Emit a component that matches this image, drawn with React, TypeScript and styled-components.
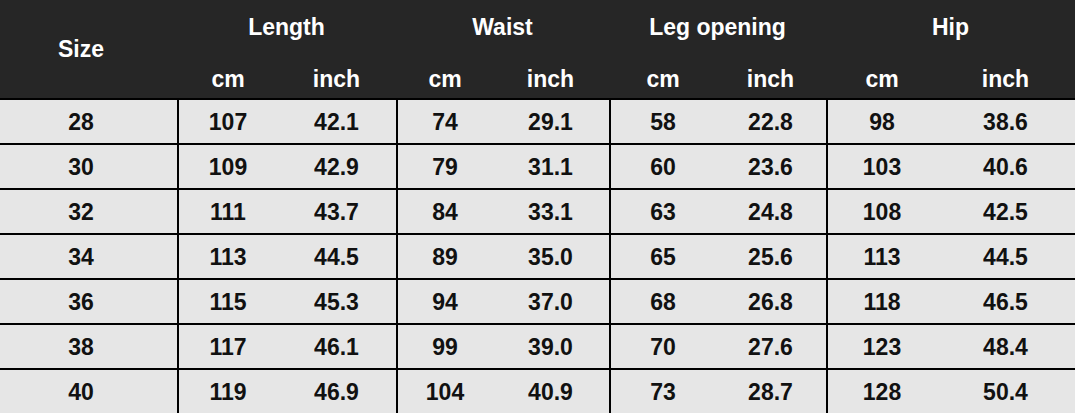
import React from 'react';
import styled, { createGlobalStyle } from 'styled-components';

const GlobalStyle = createGlobalStyle`
  html, body {
    margin: 0;
    padding: 0;
    background: #e6e6e6;
  }
  body {
    font-family: "Liberation Sans", Arial, sans-serif;
  }
`;

const COLUMNS = '177px 100px 119px 96px 117px 106px 111px 110px 139px';

const Table = styled.div`
  width: 1075px;
  font-family: "Liberation Sans", Arial, sans-serif;
  font-weight: 700;
  font-size: 23px;
`;

const Header = styled.div`
  display: grid;
  grid-template-columns: ${COLUMNS};
  grid-template-rows: 55px 43px;
  background-color: #262626;
  color: #ffffff;
`;

const SizeHead = styled.div`
  grid-row: 1 / span 2;
  display: flex;
  align-items: center;
  justify-content: center;
  padding-right: 15px;
`;

const GroupTitle = styled.div`
  grid-column: span 2;
  display: flex;
  align-items: center;
  justify-content: center;
`;

const UnitHead = styled.div<{ $first?: boolean }>`
  grid-row: 2;
  display: flex;
  align-items: center;
  justify-content: center;
  padding-top: 5px;
  padding-left: ${props => (props.$first ? '2px' : '0')};
`;

const Row = styled.div`
  display: grid;
  grid-template-columns: ${COLUMNS};
  height: 45px;
  box-sizing: border-box;
  border-top: 2px solid #000;
  background-color: #e6e6e6;
  color: #111;
`;

const Cell = styled.div<{ $first?: boolean; $size?: boolean }>`
  display: flex;
  align-items: center;
  justify-content: center;
  box-sizing: border-box;
  padding-top: 1px;
  border-left: ${props => (props.$first ? '2px solid #000' : 'none')};
  padding-right: ${props => (props.$size ? '15px' : '0')};
`;

const groups = ['Length', 'Waist', 'Leg opening', 'Hip'];

const rows: string[][] = [
  ['28', '107', '42.1', '74', '29.1', '58', '22.8', '98', '38.6'],
  ['30', '109', '42.9', '79', '31.1', '60', '23.6', '103', '40.6'],
  ['32', '111', '43.7', '84', '33.1', '63', '24.8', '108', '42.5'],
  ['34', '113', '44.5', '89', '35.0', '65', '25.6', '113', '44.5'],
  ['36', '115', '45.3', '94', '37.0', '68', '26.8', '118', '46.5'],
  ['38', '117', '46.1', '99', '39.0', '70', '27.6', '123', '48.4'],
  ['40', '119', '46.9', '104', '40.9', '73', '28.7', '128', '50.4'],
];

const App: React.FC = () => {
  return (
    <>
      <GlobalStyle />
      <Table>
        <Header>
          <SizeHead>Size</SizeHead>
          {groups.map(g => (
            <GroupTitle key={g}>{g}</GroupTitle>
          ))}
          {groups.map(g => (
            <React.Fragment key={g}>
              <UnitHead $first>cm</UnitHead>
              <UnitHead>inch</UnitHead>
            </React.Fragment>
          ))}
        </Header>
        {rows.map(r => (
          <Row key={r[0]}>
            {r.map((v, i) => (
              <Cell key={i} $size={i === 0} $first={i % 2 === 1}>
                {v}
              </Cell>
            ))}
          </Row>
        ))}
      </Table>
    </>
  );
};

export default App;
